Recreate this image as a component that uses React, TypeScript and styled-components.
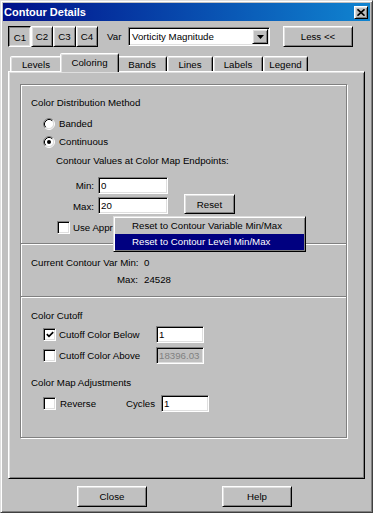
import styled, { createGlobalStyle } from "styled-components";

const GlobalStyle = createGlobalStyle`
  html, body {
    margin: 0;
    padding: 0;
    background: #c0c0c0;
  }
  body {
    font-family: "Liberation Sans", Arial, sans-serif;
    font-size: 9.7px;
    color: #000;
  }
  * {
    box-sizing: border-box;
  }
`;

const Window = styled.div`
  position: relative;
  width: 373px;
  height: 513px;
  background: #c0c0c0;
  border: 1px solid;
  border-color: #dfdfdf #404040 #404040 #dfdfdf;
  box-shadow: inset 1px 1px #fff, inset -1px -1px #808080;
  padding: 2px;
  display: flex;
  flex-direction: column;
`;

const TitleBar = styled.div`
  height: 18px;
  flex: none;
  display: flex;
  align-items: center;
  padding: 0 2px 0 1px;
  background: linear-gradient(90deg, #00108a 0%, #1084d0 100%);
  color: #fff;
  font-weight: bold;
  font-size: 11px;
  line-height: 18px;
`;

const TitleText = styled.span`
  flex: 1;
`;

const RaisedButton = styled.button`
  margin: 0;
  padding: 0;
  font: inherit;
  color: #000;
  background: #c0c0c0;
  border: 1px solid;
  border-color: #fff #000 #000 #fff;
  box-shadow: inset 1px 1px #dfdfdf, inset -1px -1px #808080;
  display: flex;
  align-items: center;
  justify-content: center;
  flex: none;
`;

const CloseBox = styled(RaisedButton)`
  width: 14px;
  height: 13px;
`;

const Toolbar = styled.div`
  display: flex;
  align-items: center;
  height: 21px;
  margin: 5px 0 0 5px;
  flex: none;
`;

const CButton = styled(RaisedButton)<{ $w: number; $down?: boolean }>`
  width: ${(p) => p.$w}px;
  height: 21px;
  ${(p) =>
    p.$down &&
    `
    border-color: #000 #fff #fff #000;
    box-shadow: inset 1px 1px #808080, inset -1px -1px #dfdfdf;
    padding: 1px 0 0 1px;
  `}
`;

const VarLabel = styled.span`
  margin-left: 9px;
  width: 21px;
`;

const Combo = styled.div`
  width: 142px;
  height: 19px;
  background: #fff;
  border: 1px solid;
  border-color: #808080 #fff #fff #808080;
  box-shadow: inset 1px 1px #000, inset -1px -1px #dfdfdf;
  display: flex;
  align-items: center;
  padding: 0 1px 0 3px;
`;

const ComboText = styled.span`
  flex: 1;
`;

const ComboArrow = styled(RaisedButton)`
  width: 16px;
  height: 15px;
`;

const LessButton = styled(RaisedButton)`
  width: 70px;
  height: 21px;
  margin-left: 13px;
`;

const TabStrip = styled.div`
  display: flex;
  align-items: flex-end;
  height: 18px;
  margin: 6px 0 0 7px;
  position: relative;
  z-index: 1;
  flex: none;
`;

const Tab = styled.div<{ $w: number; $active?: boolean }>`
  width: ${(p) => p.$w}px;
  height: ${(p) => (p.$active ? 19 : 15)}px;
  margin: ${(p) => (p.$active ? "0 -2px -1px" : "0")};
  position: relative;
  z-index: ${(p) => (p.$active ? 2 : 1)};
  background: #c0c0c0;
  border: 1px solid;
  border-bottom: none;
  border-color: #fff #000 transparent #fff;
  border-radius: 2px 2px 0 0;
  box-shadow: inset 1px 1px #dfdfdf, inset -1px 0 #808080;
  display: flex;
  align-items: center;
  justify-content: center;
  line-height: 13px;
  padding-bottom: ${(p) => (p.$active ? 2 : 0)}px;
`;

const TabPanel = styled.div`
  height: 408px;
  margin: 0 5px;
  flex: none;
  border: 1px solid;
  border-color: #fff #000 #000 #fff;
  box-shadow: inset 1px 1px #dfdfdf, inset -1px -1px #808080;
  padding: 12px 17px 0 11px;
`;

const GroupBox = styled.div`
  height: 354px;
  border: 1px solid #808080;
  box-shadow: inset 1px 1px #fff, 1px 1px #fff;
  display: flex;
  flex-direction: column;
`;

const Section = styled.div<{ $h: number }>`
  height: ${(p) => p.$h}px;
  flex: none;
  display: flex;
  flex-direction: column;
`;

const Separator = styled.div`
  height: 2px;
  flex: none;
  border-top: 1px solid #808080;
  border-bottom: 1px solid #fff;
`;

const Row = styled.div<{
  $top: number;
  $indent: number;
  $h?: number;
  $align?: string;
}>`
  display: flex;
  align-items: ${(p) => p.$align ?? "center"};
  margin-top: ${(p) => p.$top}px;
  margin-left: ${(p) => p.$indent}px;
  height: ${(p) => p.$h ?? 13}px;
  line-height: 13px;
  white-space: nowrap;
  flex: none;
`;

const Radio = styled.svg`
  width: 12px;
  height: 12px;
  flex: none;
  margin-right: 4px;
`;

const CheckBox = styled.span<{ $gap: number }>`
  width: 13px;
  height: 13px;
  flex: none;
  margin-right: ${(p) => p.$gap}px;
  background: #fff;
  border: 1px solid;
  border-color: #808080 #fff #fff #808080;
  box-shadow: inset 1px 1px #000, inset -1px -1px #dfdfdf;
  display: flex;
  align-items: center;
  justify-content: center;
`;

const FieldLabel = styled.span<{ $w: number; $right?: boolean }>`
  width: ${(p) => p.$w}px;
  flex: none;
  display: flex;
  align-items: center;
  justify-content: ${(p) => (p.$right ? "flex-end" : "flex-start")};
  margin-right: ${(p) => (p.$right ? 4 : 0)}px;
  line-height: 13px;
`;

const Field = styled.input<{ $w: number }>`
  width: ${(p) => p.$w}px;
  height: 17px;
  flex: none;
  margin: 0;
  padding: 0 0 0 2px;
  font: inherit;
  color: #000;
  background: #fff;
  border: 1px solid;
  border-color: #808080 #fff #fff #808080;
  box-shadow: inset 1px 1px #000, inset -1px -1px #dfdfdf;
  outline: none;
  &:disabled {
    background: #c0c0c0;
    color: #808080;
  }
`;

const ResetButton = styled(RaisedButton)`
  width: 51px;
  height: 20px;
  margin-left: 16px;
`;

const StatGrid = styled.div`
  display: grid;
  grid-template-columns: 107px auto;
  grid-auto-rows: 13px;
  column-gap: 6px;
  row-gap: 4px;
  margin: 11px 0 0 10px;
  line-height: 13px;
`;

const StatLabel = styled.span`
  text-align: right;
  white-space: nowrap;
`;

const ButtonRow = styled.div`
  display: flex;
  gap: 75px;
  margin: 7px 0 0 74px;
  flex: none;
`;

const DialogButton = styled(RaisedButton)`
  width: 70px;
  height: 21px;
`;

const Menu = styled.div`
  position: absolute;
  left: 112px;
  top: 215px;
  width: 193px;
  height: 36px;
  z-index: 5;
  background: #c0c0c0;
  border: 1px solid;
  border-color: #dfdfdf #000 #000 #dfdfdf;
  box-shadow: inset 1px 1px #fff, inset -1px -1px #808080;
  padding: 1px;
`;

const MenuItem = styled.div<{ $hot?: boolean }>`
  height: 16px;
  line-height: 16px;
  padding-left: 17px;
  white-space: nowrap;
  background: ${(p) => (p.$hot ? "#000080" : "transparent")};
  color: ${(p) => (p.$hot ? "#fff" : "#000")};
`;

const RadioIcon = ({ checked }: { checked?: boolean }) => (
  <Radio viewBox="0 0 12 12">
    <circle cx="6" cy="6" r="4.5" fill="#fff" />
    <path d="M2.11 9.89 A5.5 5.5 0 0 1 9.89 2.11" fill="none" stroke="#808080" />
    <path d="M9.89 2.11 A5.5 5.5 0 0 1 2.11 9.89" fill="none" stroke="#fff" />
    <path d="M2.82 9.18 A4.5 4.5 0 0 1 9.18 2.82" fill="none" stroke="#000" />
    <path d="M9.18 2.82 A4.5 4.5 0 0 1 2.82 9.18" fill="none" stroke="#dfdfdf" />
    {checked && <circle cx="6" cy="6" r="2" fill="#000" />}
  </Radio>
);

const Check = ({ checked, gap = 3 }: { checked?: boolean; gap?: number }) => (
  <CheckBox $gap={gap}>
    {checked && (
      <svg width="8" height="7" viewBox="0 0 8 7">
        <polyline
          points="0.8,3.2 3,5.4 7.2,1.2"
          fill="none"
          stroke="#000"
          strokeWidth="1.7"
        />
      </svg>
    )}
  </CheckBox>
);

const tabs = [
  { name: "Levels", w: 52 },
  { name: "Coloring", w: 59, active: true },
  { name: "Bands", w: 50 },
  { name: "Lines", w: 46 },
  { name: "Labels", w: 50 },
  { name: "Legend", w: 45 },
];

const cButtons = [
  { name: "C1", w: 23, down: true },
  { name: "C2", w: 22 },
  { name: "C3", w: 23 },
  { name: "C4", w: 22 },
];

const App = () => {
  return (
    <>
      <GlobalStyle />
      <Window>
        <TitleBar>
          <TitleText>Contour Details</TitleText>
          <CloseBox>
            <svg width="8" height="7" viewBox="0 0 8 7">
              <path d="M0.5 0.3 L7.5 6.7 M7.5 0.3 L0.5 6.7" stroke="#000" strokeWidth="1.6" />
            </svg>
          </CloseBox>
        </TitleBar>

        <Toolbar>
          {cButtons.map((b) => (
            <CButton key={b.name} $w={b.w} $down={b.down}>
              {b.name}
            </CButton>
          ))}
          <VarLabel>Var</VarLabel>
          <Combo>
            <ComboText>Vorticity Magnitude</ComboText>
            <ComboArrow>
              <svg width="7" height="4" viewBox="0 0 7 4">
                <polygon points="0,0 7,0 3.5,4" fill="#000" />
              </svg>
            </ComboArrow>
          </Combo>
          <LessButton>Less &lt;&lt;</LessButton>
        </Toolbar>

        <TabStrip>
          {tabs.map((t) => (
            <Tab key={t.name} $w={t.w} $active={t.active}>
              {t.name}
            </Tab>
          ))}
        </TabStrip>

        <TabPanel>
          <GroupBox>
            <Section $h={158}>
              <Row $top={11} $indent={10}>Color Distribution Method</Row>
              <Row $top={8} $indent={22}>
                <RadioIcon />
                Banded
              </Row>
              <Row $top={5} $indent={22}>
                <RadioIcon checked />
                Continuous
              </Row>
              <Row $top={6} $indent={35}>Contour Values at Color Map Endpoints:</Row>
              <Row $top={10} $indent={35} $h={17}>
                <FieldLabel $w={38} $right>
                  Min:
                </FieldLabel>
                <Field $w={70} defaultValue="0" readOnly />
              </Row>
              <Row $top={0} $indent={35} $h={20} $align="flex-end">
                <FieldLabel $w={38} $right style={{ height: 15 }}>
                  Max:
                </FieldLabel>
                <Field $w={70} defaultValue="20" readOnly />
                <ResetButton>Reset</ResetButton>
              </Row>
              <Row $top={7} $indent={36}>
                <Check gap={3} />
                Use Appr
              </Row>
            </Section>
            <Separator />
            <Section $h={51}>
              <StatGrid>
                <StatLabel>Current Contour Var Min:</StatLabel>
                <span>0</span>
                <StatLabel>Max:</StatLabel>
                <span>24528</span>
              </StatGrid>
            </Section>
            <Separator />
            <Section $h={139}>
              <Row $top={11} $indent={10}>Color Cutoff</Row>
              <Row $top={4} $indent={22} $h={17}>
                <FieldLabel $w={113}>
                  <Check checked gap={3} />
                  Cutoff Color Below
                </FieldLabel>
                <Field $w={48} defaultValue="1" readOnly />
              </Row>
              <Row $top={4} $indent={22} $h={17}>
                <FieldLabel $w={113}>
                  <Check gap={3} />
                  Cutoff Color Above
                </FieldLabel>
                <Field $w={48} defaultValue="18396.03" disabled />
              </Row>
              <Row $top={12} $indent={10}>Color Map Adjustments</Row>
              <Row $top={6} $indent={22} $h={17}>
                <FieldLabel $w={83}>
                  <Check gap={4} />
                  Reverse
                </FieldLabel>
                <FieldLabel $w={35}>Cycles</FieldLabel>
                <Field $w={48} defaultValue="1" readOnly />
              </Row>
            </Section>
          </GroupBox>
        </TabPanel>

        <ButtonRow>
          <DialogButton>Close</DialogButton>
          <DialogButton>Help</DialogButton>
        </ButtonRow>

        <Menu>
          <MenuItem>Reset to Contour Variable Min/Max</MenuItem>
          <MenuItem $hot>Reset to Contour Level Min/Max</MenuItem>
        </Menu>
      </Window>
    </>
  );
};

export default App;
